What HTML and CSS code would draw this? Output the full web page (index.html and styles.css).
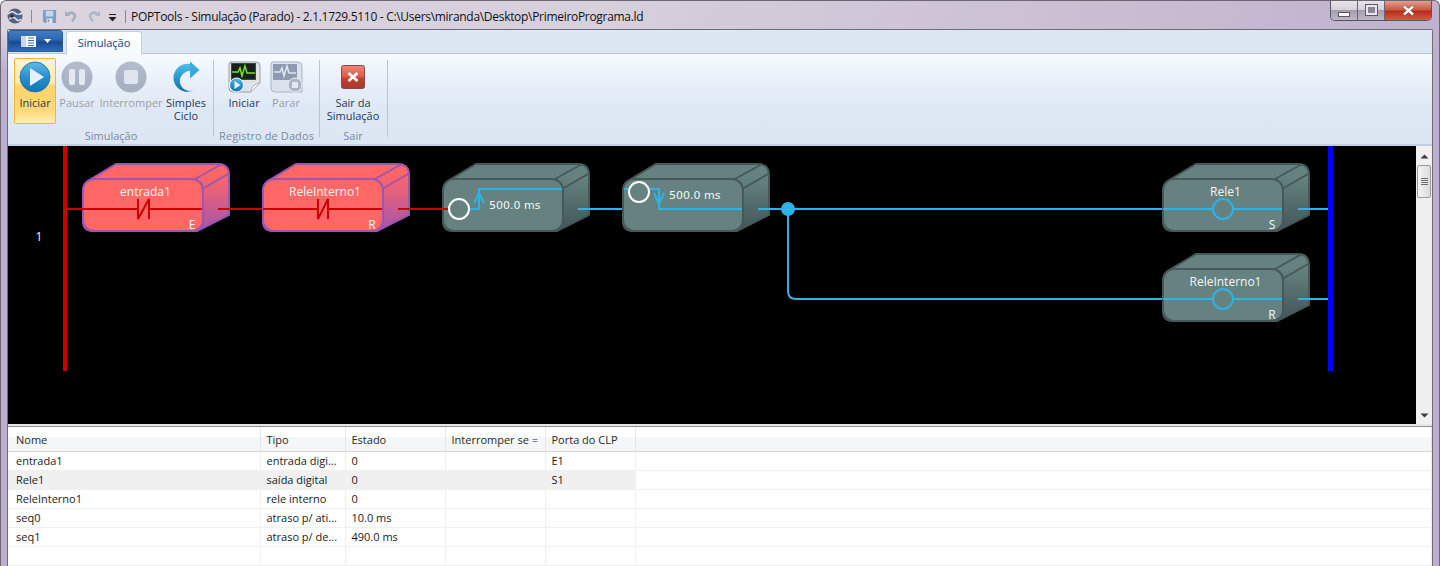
FILE: index.html
```html
<!DOCTYPE html>
<html lang="pt">
<head>
<meta charset="utf-8">
<title>POPTools</title>
<link rel="stylesheet" href="styles.css">
</head>
<body>
<div class="window">
  <svg class="defs" width="0" height="0" aria-hidden="true">
    <defs>
      <linearGradient id="gPlay" x1="0" y1="0" x2="0" y2="1"><stop offset="0" stop-color="#5fb9e6"/><stop offset=".5" stop-color="#2a8fd0"/><stop offset="1" stop-color="#0d76b8"/></linearGradient>
      <linearGradient id="gOff" x1="0" y1="0" x2="0" y2="1"><stop offset="0" stop-color="#b4bdcc"/><stop offset="1" stop-color="#a3aec0"/></linearGradient>
      <linearGradient id="gLoop" x1="0" y1="0" x2="0" y2="1"><stop offset="0" stop-color="#4cc0ea"/><stop offset="1" stop-color="#0f6fb0"/></linearGradient>
      <linearGradient id="gExit" x1="0" y1="0" x2="0" y2="1"><stop offset="0" stop-color="#ee8a78"/><stop offset=".5" stop-color="#d85a48"/><stop offset=".55" stop-color="#c04030"/><stop offset="1" stop-color="#a83a2c"/></linearGradient>
      <linearGradient id="gRedSide" x1="0" y1="0" x2="0" y2="1"><stop offset=".15" stop-color="#ff6666"/><stop offset="1" stop-color="#a455ac"/></linearGradient>
      <linearGradient id="gGreySide" x1="0" y1="0" x2="0" y2="1"><stop offset=".2" stop-color="#658280"/><stop offset="1" stop-color="#435556"/></linearGradient>
      <g id="boxRed">
        <path class="box-side-red" d="M0,13 Q0,5 8,0 L33,-15 H135 Q146,-15 146,-4 V36 L114,52 H10 Q0,52 0,42 Z"/>
        <rect class="box-front-red" x="0" y="0" width="120" height="52" rx="11"/>
        <path class="box-line-red" d="M112,0 L139,-15 M121,9 L145,-5"/>
      </g>
      <g id="boxGrey">
        <path class="box-side-grey" d="M0,13 Q0,5 8,0 L33,-15 H135 Q146,-15 146,-4 V36 L114,52 H10 Q0,52 0,42 Z"/>
        <rect class="box-front-grey" x="0" y="0" width="120" height="52" rx="11"/>
        <path class="box-line-grey" d="M112,0 L139,-15 M121,9 L145,-5"/>
      </g>
    </defs>
  </svg>

  <header class="titlebar">
    <svg class="qa-logo" width="18" height="18" viewBox="0 0 18 18"><circle cx="9" cy="9" r="7.5" fill="#56607a"/><path d="M2 7 Q6 3 9 6 T16 6 M3 12 Q8 9 10 12 T15 12" stroke="#dfe4ee" stroke-width="1.6" fill="none"/><circle cx="6" cy="9" r="1.6" fill="#20253a"/><circle cx="12" cy="9" r="1.6" fill="#2f74c0"/></svg>
    <span class="qa-sep"></span>
    <svg class="qa-save" width="15" height="15" viewBox="0 0 16 16"><path d="M1 1 H15 V15 H3 L1 13 Z" fill="#7f9dc4"/><rect x="4" y="2" width="8" height="6" fill="#c6d4e6"/><rect x="5" y="10" width="6" height="5" fill="#e2e8f0"/><rect x="6" y="11" width="2" height="3" fill="#7f9dc4"/></svg>
    <svg class="qa-undo" width="12" height="12" viewBox="0 0 14 14"><path d="M3 5 Q7 1 11 5 Q13 9 8 13" stroke="#a2adbd" stroke-width="3" fill="none"/><path d="M0 1 L6 7 H0 Z" fill="#a2adbd"/></svg>
    <svg class="qa-redo" width="12" height="12" viewBox="0 0 14 14"><path d="M11 5 Q7 1 3 5 Q1 9 6 13" stroke="#adb7c6" stroke-width="3" fill="none"/><path d="M14 1 L8 7 H14 Z" fill="#adb7c6"/></svg>
    <svg class="qa-more" width="9" height="8" viewBox="0 0 9 8"><path d="M1 0.5 H8" stroke="#222"/><path d="M0.5 3 H8.5 L4.5 7.5 Z" fill="#222"/></svg>
    <span class="qa-sep qa-sep-2"></span>
    <span class="title-text">POPTools - Simulação (Parado) - 2.1.1729.5110 - C:\Users\miranda\Desktop\PrimeiroPrograma.ld</span>
    <div class="winctl">
      <span class="ctl ctl-min"><i class="min-glyph"></i></span>
      <span class="ctl ctl-max"><i class="max-glyph"></i></span>
      <span class="ctl ctl-close"><svg width="13" height="11" viewBox="0 0 13 11"><path d="M2 1.500 L11 9.500 M11 1.500 L2 9.500" stroke="#6a3a34" stroke-width="3.600"/><path d="M2 1.500 L11 9.500 M11 1.500 L2 9.500" stroke="#fff" stroke-width="2.400"/></svg></span>
    </div>
  </header>

  <div class="client">
    <nav class="tabs">
      <div class="appbtn">
        <svg width="15" height="11" viewBox="0 0 15 11"><rect x="0" y="0" width="15" height="11" fill="#fff"/><rect x="0" y="0" width="5" height="11" fill="#c9d7ea"/><path d="M7 2 H13 M7 4.5 H13 M7 7 H13 M7 9.5 H13" stroke="#3a6db0"/></svg>
        <svg width="7" height="4" viewBox="0 0 7 4"><path d="M0 0 H7 L3.5 4 Z" fill="#fff"/></svg>
      </div>
      <div class="tab">Simulação</div>
    </nav>

    <section class="ribbon">
      <div class="group group-sim">
        <div class="btns">
          <div class="rbtn w42 active">
            <svg class="ico" width="32" height="32" viewBox="0 0 32 32"><circle cx="16" cy="16" r="15" fill="url(#gPlay)" stroke="#2b79a8"/><path d="M11 7 L25 16 L11 25 Z" fill="#e6f2fb"/></svg>
            <span>Iniciar</span>
          </div>
          <div class="rbtn w42 off">
            <svg class="ico" width="32" height="32" viewBox="0 0 32 32"><circle cx="16" cy="16" r="15.5" fill="url(#gOff)"/><rect x="8" y="8" width="6" height="16" rx="2" fill="#e4e9f1"/><rect x="18" y="8" width="6" height="16" rx="2" fill="#e4e9f1"/></svg>
            <span>Pausar</span>
          </div>
          <div class="rbtn w66 off">
            <svg class="ico" width="32" height="32" viewBox="0 0 32 32"><circle cx="16" cy="16" r="15.5" fill="url(#gOff)"/><rect x="9" y="9" width="14" height="14" rx="2" fill="#dfe5ee"/></svg>
            <span>Interromper</span>
          </div>
          <div class="rbtn w44">
            <svg class="ico" width="32" height="32" viewBox="0 0 32 32"><path d="M27 27 A14 14 0 1 1 20 3 L20 10 A10 10 0 1 0 27 27 Z" fill="url(#gLoop)"/><path d="M20 0.500 L29.500 9 L20 17.500 Z" fill="#39a9de"/></svg>
            <span>Simples<br>Ciclo</span>
          </div>
        </div>
        <div class="glabel">Simulação</div>
      </div>
      <div class="group group-log">
        <div class="btns">
          <div class="rbtn w42">
            <svg class="ico" width="34" height="32" viewBox="0 0 34 32"><path d="M3 1 H29 Q33 1 33 5 V22 L24 31 H6 Q2 31 2 27 V3 Z" fill="#dfe2e6" stroke="#9aa0a6"/><rect x="4.500" y="2.500" width="24" height="16" fill="#16221a" stroke="#444"/><path d="M5 11 H11 L13 7 L15 15 L18 5 L20 12 H28" stroke="#7ce02a" fill="none" stroke-width="1.500"/><path d="M24 31 Q24 24 33 22 Z" fill="#fff" stroke="#b0b4b8"/><circle cx="9.500" cy="24" r="7" fill="url(#gPlay)" stroke="#fff"/><path d="M7.500 20 L13.500 24 L7.500 28 Z" fill="#e6f2fb"/></svg>
            <span>Iniciar</span>
          </div>
          <div class="rbtn w42 off">
            <svg class="ico" width="34" height="32" viewBox="0 0 34 32"><path d="M3 1 H29 Q33 1 33 5 V31 H6 Q2 31 2 27 V3 Z" fill="#dce2ec" stroke="#aab3c2"/><rect x="4" y="3" width="24" height="16" fill="#8d9ab2"/><path d="M5 11 H11 L13 7 L15 15 L18 5 L20 12 H27" stroke="#dfe6f0" fill="none" stroke-width="1.500"/><circle cx="26" cy="24" r="7" fill="#aab4c4" stroke="#eef1f5"/><rect x="23" y="21" width="6" height="6" fill="#e4e9f1"/></svg>
            <span>Parar</span>
          </div>
        </div>
        <div class="glabel glabel-log">Registro de Dados</div>
      </div>
      <div class="group group-exit">
        <div class="btns">
          <div class="rbtn w50">
            <svg class="ico" width="26" height="32" viewBox="0 0 26 32"><rect x="1.500" y="4.500" width="23" height="23" rx="2" fill="url(#gExit)" stroke="#8c4a40"/><path d="M8.500 12 L17.500 20 M17.500 12 L8.500 20" stroke="#fff" stroke-width="2.800"/></svg>
            <span>Sair da<br>Simulação</span>
          </div>
        </div>
        <div class="glabel glabel-exit">Sair</div>
      </div>
    </section>

    <section class="canvas-wrap">
      <svg class="diagram" width="1408" height="278" viewBox="8 146 1408 278">
        <path class="rail-red" d="M65 146 V371"/>
        <path class="rail-blue" d="M1330.500 146 V371"/>
        <text class="rownum" x="39" y="241">1</text>

        <use href="#boxRed" x="83" y="179"/>
        <path class="wire-red" d="M67 209 H138 M149 209 H202 M218 209 H263 M138 199 V219 L149 199 V219"/>
        <text class="lbl" x="145.500" y="196">entrada1</text>
        <text class="tag" x="192" y="229">E</text>

        <use href="#boxRed" x="263" y="179"/>
        <path class="wire-red" d="M263 209 H318 M328 209 H382 M318 199 V219 L328 199 V219"/>
        <text class="lbl" x="325" y="196">ReleInterno1</text>
        <text class="tag" x="372" y="229">R</text>

        <use href="#boxGrey" x="443" y="179"/>
        <path class="wire-red" d="M398 209 H449"/>
        <path class="wire-blue" d="M469 209 H479 V189 H562 M474 203 L479 193 L484 203"/>
        <circle class="ring-white" cx="459" cy="209" r="10"/>
        <text class="ms" x="489" y="208.500">500.0 ms</text>

        <path class="wire-blue" d="M578 209 H623"/>
        <use href="#boxGrey" x="623" y="179"/>
        <path class="wire-blue" d="M624 189 H629 M649 189 H659 V209 H742 M654 193 L659 204 L664 193"/>
        <circle class="ring-white" cx="639" cy="192" r="10"/>
        <text class="ms" x="669" y="198.500">500.0 ms</text>

        <path class="wire-blue" d="M758 209 H1163 M788 209 V291 Q788 299 796 299 H1163"/>
        <circle class="node" cx="788" cy="209" r="7"/>

        <use href="#boxGrey" x="1163" y="179"/>
        <path class="wire-blue" d="M1163 209 H1213 M1233 209 H1282 M1298 209 H1328"/>
        <circle class="ring-blue" cx="1223" cy="209" r="10"/>
        <text class="lbl" x="1225.500" y="196">Rele1</text>
        <text class="tag" x="1272" y="229">S</text>

        <use href="#boxGrey" x="1163" y="269"/>
        <path class="wire-blue" d="M1163 299 H1213 M1233 299 H1282 M1298 299 H1328"/>
        <circle class="ring-blue" cx="1223" cy="299" r="10"/>
        <text class="lbl" x="1225.500" y="286">ReleInterno1</text>
        <text class="tag" x="1272" y="319">R</text>
      </svg>
      <div class="scrollbar">
        <svg class="arrow-up" width="9" height="5" viewBox="0 0 9 5"><path d="M4.500 0.500 L8.500 4.500 H0.500 Z" fill="#3c3c3c"/></svg>
        <div class="thumb"><i></i><i></i><i></i><i></i></div>
        <svg class="arrow-down" width="9" height="5" viewBox="0 0 9 5"><path d="M4.500 4.500 L8.500 0.500 H0.500 Z" fill="#3c3c3c"/></svg>
      </div>
    </section>

    <section class="grid">
      <table>
        <colgroup><col class="c1"><col class="c2"><col class="c3"><col class="c4"><col class="c5"><col></colgroup>
        <thead><tr><th>Nome</th><th>Tipo</th><th>Estado</th><th>Interromper se =</th><th>Porta do CLP</th><th></th></tr></thead>
        <tbody>
          <tr><td>entrada1</td><td>entrada digi...</td><td>0</td><td></td><td>E1</td><td></td></tr>
          <tr class="sel"><td>Rele1</td><td>saída digital</td><td>0</td><td></td><td>S1</td><td class="nosel"></td></tr>
          <tr><td>ReleInterno1</td><td>rele interno</td><td>0</td><td></td><td></td><td></td></tr>
          <tr><td>seq0</td><td>atraso p/ ati...</td><td>10.0 ms</td><td></td><td></td><td></td></tr>
          <tr><td>seq1</td><td>atraso p/ de...</td><td>490.0 ms</td><td></td><td></td><td></td></tr>
          <tr><td></td><td></td><td></td><td></td><td></td><td></td></tr>
        </tbody>
      </table>
    </section>
  </div>
</div>
</body>
</html>
```
FILE: styles.css
```css
* { box-sizing: border-box; }
html, body { margin: 0; padding: 0; height: 566px; overflow: hidden; }
body { font-family: "Open Sans", "Liberation Sans", sans-serif; font-size: 12px; color: #1c1c1c; }
.defs { display: block; width: 0; height: 0; }
.window {
  width: 1440px; height: 566px; display: flex; flex-direction: column;
  background:
    linear-gradient(180deg, rgba(186,172,206,0) 29px, #bcaed0 70px),
    linear-gradient(100deg, #dcd5de 0%, #d6cfdc 40%, #c8bcd2 75%, #bcaecb 100%);
  border: 1px solid #6c6672; border-bottom: 0; border-radius: 6px 6px 0 0;
  padding: 0 6px;
}
.titlebar { height: 28px; flex: none; display: flex; align-items: center; position: relative; }
.qa-logo { margin-left: -1px; margin-top: 2px; flex: none; }
.qa-sep { width: 1px; height: 13px; background: #8d8794; margin-left: 7px; margin-top: 2px; flex: none; }
.qa-sep-2 { margin-left: 8px; }
.qa-save { margin-left: 10px; margin-top: 2px; flex: none; }
.qa-undo { margin-left: 8px; margin-top: 1px; flex: none; }
.qa-redo { margin-left: 11px; margin-top: 1px; flex: none; }
.qa-more { margin-left: 8px; margin-top: 5px; flex: none; }
.title-text { margin-left: 5px; margin-top: 2px; font-size: 12px; white-space: nowrap; color: #111; letter-spacing: -0.3px; }
.winctl {
  margin-left: auto; margin-right: 1px; align-self: flex-start; display: flex; height: 20px;
  border: 1px solid #5a5560; border-top: 0; border-radius: 0 0 5px 5px; overflow: hidden;
}
.ctl { display: flex; align-items: center; justify-content: center; height: 100%; }
.ctl-min, .ctl-max {
  width: 27px; border-right: 1px solid #6c6672;
  background: linear-gradient(#e8e4ea 0%, #d6d0da 45%, #a69eac 50%, #bdb6c4 100%);
}
.ctl-close { width: 46px; background: linear-gradient(#e0a090 0%, #cc5a44 45%, #b82e1c 55%, #d85a40 100%); }
.min-glyph { display: block; width: 12px; height: 5px; background: #fff; border: 1px solid #5c5866; margin-top: 8px; }
.max-glyph { display: block; width: 11px; height: 10px; border: 2px solid #e8e8ee; outline: 1px solid #5c5866; background: #8a8494; margin-top: -1px; }

.client { flex: 1; min-height: 0; display: flex; flex-direction: column; border: 1px solid #6f6c78; border-bottom: 0; background: #fff; border-radius: 2px 2px 0 0; }
.tabs { height: 24px; flex: none; display: flex; align-items: flex-end; background: #dde7f3; border-bottom: 1px solid #b8c6da; }
.appbtn {
  width: 55px; height: 22px; margin-bottom: 1px; display: flex; align-items: center; justify-content: center; gap: 8px;
  border: 1px solid #2a5a9c; border-radius: 3px 3px 0 0;
  background: linear-gradient(#3f7dc4 0%, #2c64ae 45%, #164a94 55%, #2f6cb8 100%);
}
.tab {
  width: 76px; height: 23px; margin-left: 3px; margin-bottom: -1px; padding-top: 3px; text-align: center; font-size: 11px; color: #15428b;
  background: linear-gradient(#fff, #f6fafe); border: 1px solid #c4d0e0; border-bottom: 0; border-radius: 3px 3px 0 0;
}
.ribbon {
  height: 92px; flex: none; display: flex; padding-left: 6px;
  background: linear-gradient(#f7fbff 0%, #e8f0fa 30%, #dee8f4 62%, #dde7f3 100%);
  border-bottom: 2px solid #c3d0e2;
}
.group { position: relative; display: flex; flex-direction: column; padding-top: 4px; }
.group::after { content: ""; position: absolute; right: 0; top: 6px; height: 77px; width: 1px; background: #b9c5d5; }
.group-sim { width: 200px; }
.group-log { width: 106px; padding-left: 9px; }
.group-exit { width: 68px; padding-left: 8px; }
.btns { display: flex; height: 66px; }
.rbtn {
  display: flex; flex-direction: column; align-items: center; height: 66px; border: 1px solid transparent; border-radius: 2px;
  font-size: 11px; line-height: 13px; text-align: center; color: #1e395b; white-space: nowrap;
}
.rbtn span { display: block; }
.rbtn .ico { margin-top: 2px; margin-bottom: 3px; flex: none; }
.w42 { width: 42px; }
.w44 { width: 44px; }
.w50 { width: 50px; }
.w66 { width: 66px; }
.off { color: #9a9fa8; }
.active {
  border-color: #f2b636;
  background: linear-gradient(#fff6d6 0%, #ffe9a8 38%, #ffd36c 42%, #ffd878 80%, #ffefb0 100%);
}
.glabel { height: 14px; margin-top: 5px; text-align: center; font-size: 11px; line-height: 14px; color: #7a8aa0; padding-right: 6px; }
.glabel-log { margin-left: -4px; padding-right: 0; text-align: left; white-space: nowrap; letter-spacing: 0.1px; }
.glabel-exit { padding-right: 10px; }

.canvas-wrap { height: 280px; flex: none; display: flex; background: #000; border-bottom: 2px solid #e6e6e6; }
.diagram { display: block; flex: none; background: #000; }
.rail-red { stroke: #cc0000; stroke-width: 4; fill: none; }
.rail-blue { stroke: #0000ff; stroke-width: 5; fill: none; }
.wire-red { stroke: #cc0000; stroke-width: 2; fill: none; }
.wire-blue { stroke: #2eb3e6; stroke-width: 2; fill: none; }
.ring-white { stroke: #fff; stroke-width: 2; fill: #658280; }
.ring-blue { stroke: #2eb3e6; stroke-width: 2; fill: #658280; }
.node { fill: #2eb3e6; }
.box-side-red { fill: url(#gRedSide); stroke: #9c55b0; stroke-width: 2; }
.box-front-red { fill: #ff6666; stroke: #9c55b0; stroke-width: 2; }
.box-line-red { stroke: #9c55b0; stroke-width: 2; fill: none; }
.box-side-grey { fill: url(#gGreySide); stroke: #465857; stroke-width: 2; }
.box-front-grey { fill: #658280; stroke: #465857; stroke-width: 2; }
.box-line-grey { stroke: #465857; stroke-width: 2; fill: none; }
.lbl { font-family: "Open Sans", sans-serif; font-size: 12px; fill: #f6f6f6; text-anchor: middle; }
.tag { font-family: "Open Sans", sans-serif; font-size: 12px; fill: #f6f6f6; text-anchor: middle; }
.ms { font-family: "DejaVu Sans", sans-serif; font-size: 11px; fill: #f6f6f6; }
.rownum { font-family: "Open Sans", sans-serif; font-size: 12px; fill: #f6f6f6; text-anchor: middle; }
.scrollbar { width: 16px; flex: none; display: flex; flex-direction: column; align-items: center; background: #f0f0f0; }
.arrow-up { margin-top: 8px; }
.thumb {
  width: 14px; height: 33px; margin-top: 6px; border: 1px solid #9a9a9a; border-radius: 2px;
  background: linear-gradient(90deg, #f4f4f4, #dcdcdc); display: flex; flex-direction: column; align-items: center; justify-content: center; gap: 1px;
}
.thumb i { display: block; width: 7px; height: 1px; background: #6e6e6e; }
.arrow-down { margin-top: auto; margin-bottom: 6px; }

.grid { flex: 1; min-height: 0; background: #fff; border-top: 1px solid #8a9097; overflow: hidden; }
table { border-collapse: collapse; table-layout: fixed; width: 100%; font-size: 11px; }
.c1 { width: 252px; }
.c2 { width: 85px; }
.c3 { width: 100px; }
.c4 { width: 100px; }
.c5 { width: 90px; }
th {
  height: 24px; padding: 2px 0 0 8px; font-weight: 400; text-align: left; color: #2a2a2a;
  background: linear-gradient(#fff 0%, #fff 40%, #f5f6f7 41%, #f5f6f7 100%);
  border-right: 1px solid #e6e7e8; border-bottom: 1px solid #d5d5d5;
}
td { height: 19px; padding: 0 0 0 6px; border-right: 1px solid #f0f0f0; border-bottom: 1px solid #f0f0f0; white-space: nowrap; overflow: hidden; color: #1a1a1a; }
td:first-child { padding-left: 8px; }
th:nth-child(n+2) { padding-left: 6px; }
.sel td { background: #f0f0f0; }
.sel td.nosel { background: #fff; }
```
